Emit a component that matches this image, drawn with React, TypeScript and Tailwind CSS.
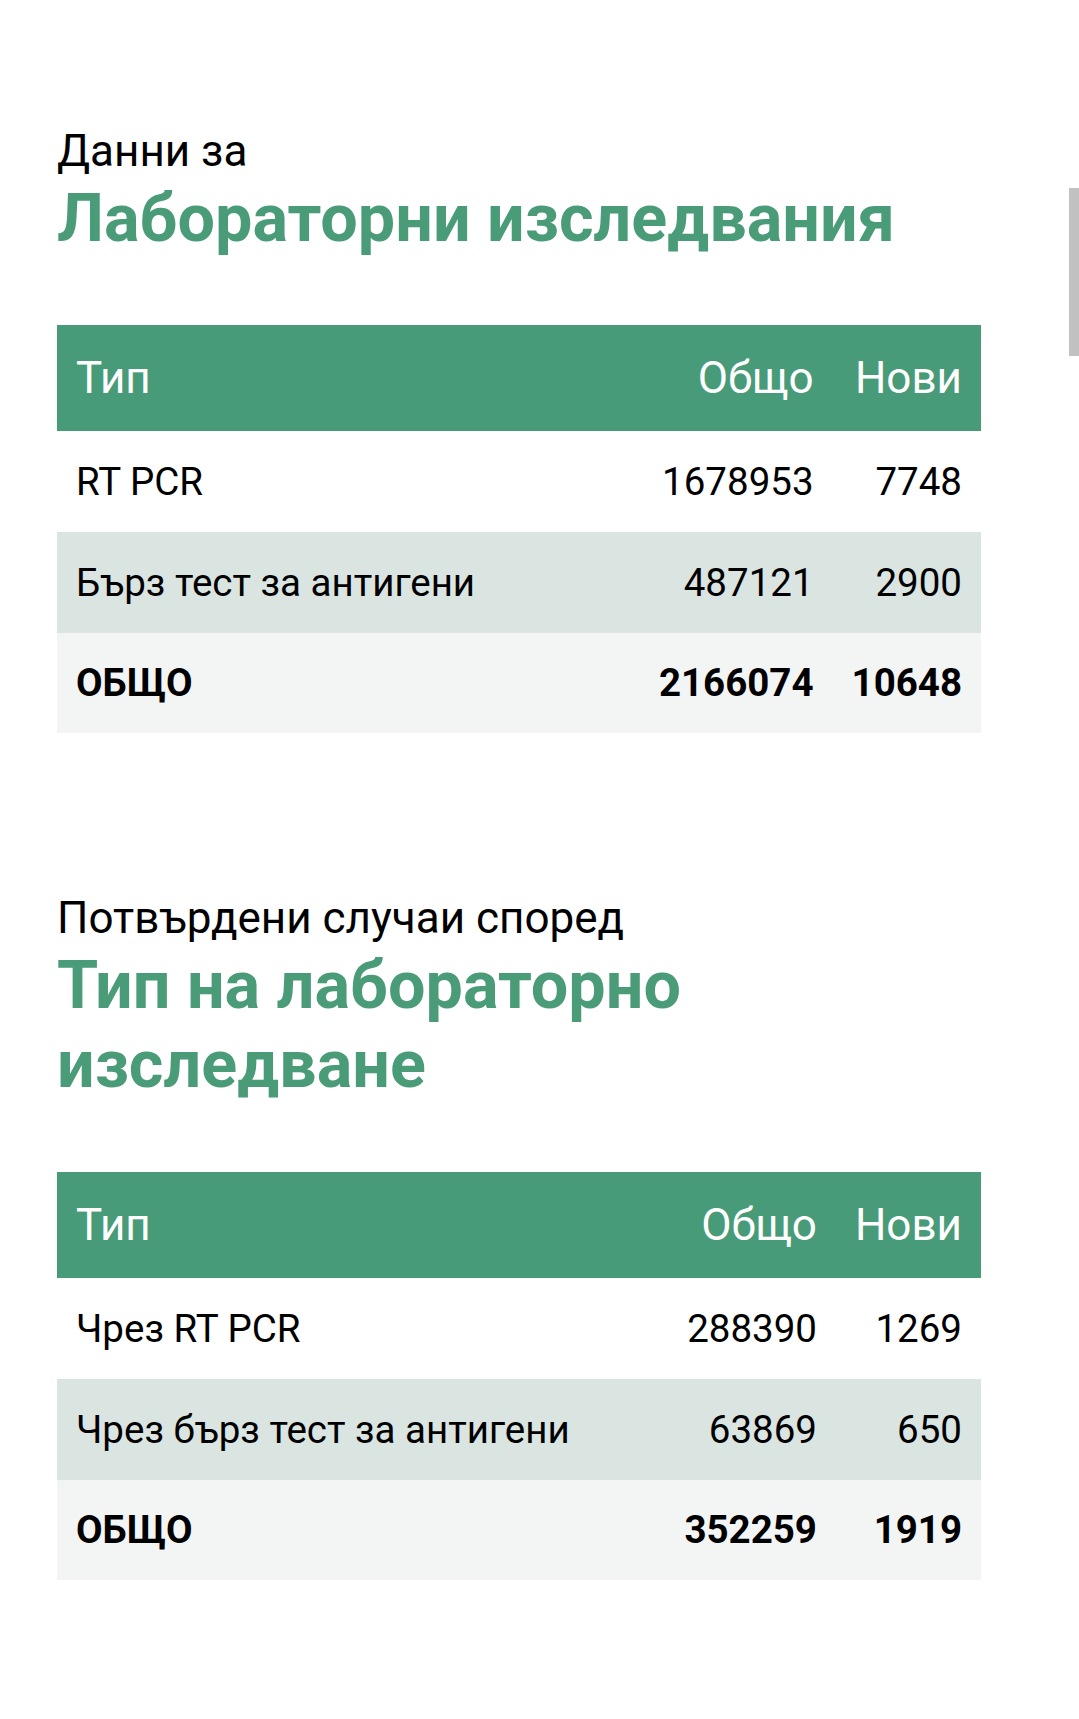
type Row = { label: string; total: number; fresh: number };

const labRows: Row[] = [
    { label: "RT PCR", total: 1678953, fresh: 7748 },
    { label: "Бърз тест за антигени", total: 487121, fresh: 2900 },
];

const caseRows: Row[] = [
    { label: "Чрез RT PCR", total: 288390, fresh: 1269 },
    { label: "Чрез бърз тест за антигени", total: 63869, fresh: 650 },
];

function StatsTable({ rows, total }: { rows: Row[]; total: Row }) {
    return (
        <table className="w-full border-collapse">
            <thead>
                <tr className="h-[106px] bg-[#479b78] text-[44px] font-normal text-white">
                    <th className="w-full px-[19px] text-left font-normal">Тип</th>
                    <th className="px-[19px] text-right font-normal">Общо</th>
                    <th className="px-[19px] text-right font-normal">Нови</th>
                </tr>
            </thead>
            <tbody className="text-[38.5px] text-black">
                {rows.map((row, i) => (
                    <tr key={row.label} className={i % 2 === 0 ? "h-[101px] bg-white" : "h-[101px] bg-[#dae4e1]"}>
                        <td className="whitespace-nowrap px-[19px]">{row.label}</td>
                        <td className="px-[19px] text-right">{row.total}</td>
                        <td className="px-[19px] text-right">{row.fresh}</td>
                    </tr>
                ))}
                <tr className="h-[100px] bg-[#f3f5f4] font-bold">
                    <td className="px-[19px]">{total.label}</td>
                    <td className="px-[19px] text-right">{total.total}</td>
                    <td className="px-[19px] text-right">{total.fresh}</td>
                </tr>
            </tbody>
        </table>
    );
}

function SectionTitle({ lead, title }: { lead: string; title: string }) {
    return (
        <header>
            <p className="text-[44px] leading-[52px] text-black">{lead}</p>
            <h2 className="mt-[2px] text-[66.5px] font-bold leading-[79px] text-[#4a9b78]">{title}</h2>
        </header>
    );
}

export default function App() {
    return (
        <main
            className="relative min-h-[1719px] bg-white pt-[125px] pl-[57px]"
            style={{ fontFamily: "Roboto, 'Noto Sans', sans-serif" }}
        >
            <div className="w-[924px]">
                <SectionTitle lead="Данни за" title="Лабораторни изследвания" />
                <div className="mt-[67px]">
                    <StatsTable rows={labRows} total={{ label: "ОБЩО", total: 2166074, fresh: 10648 }} />
                </div>

                <div className="mt-[159px]">
                    <SectionTitle lead="Потвърдени случаи според" title="Тип на лабораторно изследване" />
                </div>
                <div className="mt-[68px]">
                    <StatsTable rows={caseRows} total={{ label: "ОБЩО", total: 352259, fresh: 1919 }} />
                </div>
            </div>

            {/* scrollbar thumb */}
            <div className="absolute top-[188px] right-0 h-[168px] w-[10px] bg-[#c1c1c1]" />
        </main>
    );
}
